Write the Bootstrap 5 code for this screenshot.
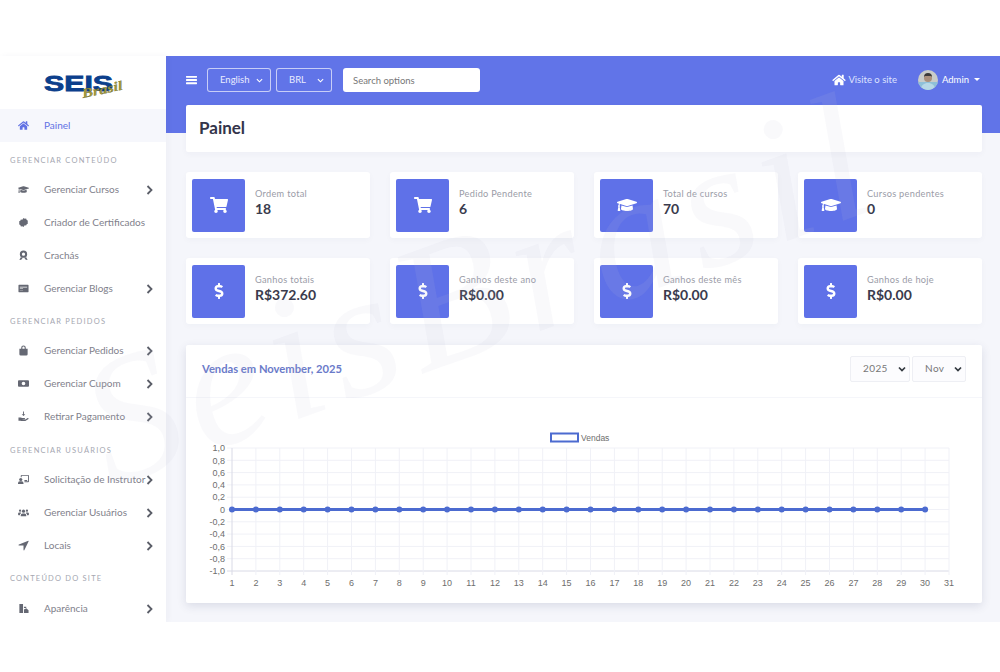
<!doctype html>
<html lang="pt">
<head>
<meta charset="utf-8">
<title>Painel</title>
<link href="https://cdn.jsdelivr.net/npm/bootstrap@5.3.0/dist/css/bootstrap.min.css" rel="stylesheet">
<style>
body{background:#fff;font-family:"Lato","Noto Sans",sans-serif;overflow:hidden;color:#3a3b4d}
.shell{margin-top:56px;height:566px;position:relative}
.side{width:166px;flex:none;background:#fff;box-shadow:2px 0 6px rgba(40,50,90,.04);position:relative;overflow:hidden}
.brandbox{height:53px}
.side-item{height:33px;padding:0 13px 0 18px;color:#7f818b;font-size:10px;white-space:nowrap}
.side-item.on{background:#f6f7fc;color:#6272e4}
.side-ico{width:11px;height:11px;fill:#656873;margin-right:15px;flex:none}
.on .side-ico{fill:#6272e4}
.chev{width:7px;height:10px;margin-left:auto;stroke:#5b5e68;stroke-width:1.800;fill:none;flex:none}
.side-head{height:25px;margin-top:4px;padding-left:10px;font-size:7.5px;letter-spacing:1.2px;color:#a5a7b1;text-transform:uppercase}
.side-head.gap-a{margin-top:6px}
.side-head.gap-b{margin-top:5px}
.side-head.gap-c{height:26px}
.mainp{background:linear-gradient(#6174e8 77px,#f5f6fb 77px);padding:0 18px 0 20px}
.topbar{height:48px}
.burger{width:11px;height:12px;fill:#fff;margin-right:10px}
.sel-dark,.sel-dark:focus{background-color:transparent;border:1px solid rgba(255,255,255,.65);color:#e9ecff;font-size:9.5px;height:24px;padding:0 10px 0 12px;border-radius:3px;background-size:7px;background-position:right 7px center;box-shadow:none;background-image:url("data:image/svg+xml,%3csvg xmlns='http://www.w3.org/2000/svg' viewBox='0 0 16 16'%3e%3cpath fill='none' stroke='%23fff' stroke-width='2.500' d='M2 5l6 6 6-6'/%3e%3c/svg%3e")}
.w-en{width:64px;margin-right:5px}.w-br{width:56px;margin-right:11px}
.searchb{width:137px;height:24px;font-size:9.5px;border:0;border-radius:3px;padding:0 10px;color:#666}
.searchb::placeholder{color:#777}
.visit{font-size:9.5px;color:#dfe3ff;text-decoration:none;margin-right:21px}
.visit svg{width:14px;height:12px;fill:#fff;margin-right:2px}
.avat{width:20px;height:20px;border-radius:50%;margin-right:4px}
.admin{font-size:9.5px;color:#fff;margin-right:2px}
.admin.dropdown-toggle::after{margin-left:5px;border-top-width:3px;border-left-width:3px;border-right-width:3px;vertical-align:2px}
.titlecard{height:47px;margin-top:1px;margin-bottom:20px;border-radius:2px;padding-left:13px;background:#fff;box-shadow:0 2px 6px rgba(40,50,90,.04);border:0}
.titlecard h1{font-size:17px;font-weight:700;margin:0;color:#33344a}
.stat-row{--bs-gutter-x:20px;--bs-gutter-y:20px}
.statc{height:66px;border:0;border-radius:3px;padding:6px;background:#fff;box-shadow:0 2px 6px rgba(40,50,90,.03)}
.statbox{width:53px;height:53px;background:#5f71e8;border-radius:2px;margin-right:10px;flex:none}
.statbox svg{fill:#fff;height:16px;width:20px}
.stat-txt{padding-bottom:5px}
.stat-l{font-size:9.2px;letter-spacing:.3px;color:#9a9ca7;line-height:13px}
.stat-v{font-size:14px;font-weight:700;color:#3a3b4d;line-height:18px}
.chartc{margin-top:21px;height:258px;border:0;border-radius:2px;background:#fff;box-shadow:0 3px 10px rgba(40,50,90,.13)}
.charth{height:53px;padding:0 16px 5px;border-bottom:1px solid #f5f6fa}
.charth h2{font-size:11.2px;font-weight:700;color:#6a7ac9;margin:0}
.sel-lt,.sel-lt:focus{height:26px;font-size:10px;letter-spacing:.4px;border:1px solid #eeeff4;border-radius:2px;color:#777;padding:0 8px 0 12px;background-color:#fcfcfe;background-size:8px;background-position:right 3px center;box-shadow:none;background-image:url("data:image/svg+xml,%3csvg xmlns='http://www.w3.org/2000/svg' viewBox='0 0 16 16'%3e%3cpath fill='none' stroke='%23343a40' stroke-width='3.500' d='M2 5l6 6 6-6'/%3e%3c/svg%3e")}
.w-y{width:60px;margin-right:2px}.w-m{width:54px}
.chartsvg{display:block;width:796px;height:205px}
.chartsvg text{font-family:"Liberation Sans",sans-serif;font-size:9px;fill:#6e6e6e}
.chartsvg text.lg{font-size:8.5px}
.wmark{position:absolute;left:90px;top:312px;font:italic 400 180px "Liberation Serif",serif;color:rgba(196,198,218,.1);transform:rotate(-20deg);transform-origin:left center;white-space:nowrap;pointer-events:none;line-height:.7;letter-spacing:10px}
</style>
</head>
<body>
<svg width="0" height="0" class="d-block" aria-hidden="true">
<symbol id="i-home" viewBox="0 0 576 512"><path d="M280.37 148.26L96 300.11V464a16 16 0 0 0 16 16l112.06-.29a16 16 0 0 0 15.92-16V368a16 16 0 0 1 16-16h64a16 16 0 0 1 16 16v95.64a16 16 0 0 0 16 16.05L464 480a16 16 0 0 0 16-16V300L295.67 148.26a12.19 12.19 0 0 0-15.3 0zM571.6 251.47L488 182.56V44.05a12 12 0 0 0-12-12h-56a12 12 0 0 0-12 12v72.61L318.47 43a48 48 0 0 0-61 0L4.34 251.47a12 12 0 0 0-1.6 16.9l25.5 31A12 12 0 0 0 45.15 301l235.22-193.74a12.19 12.19 0 0 1 15.3 0L530.9 301a12 12 0 0 0 16.9-1.6l25.5-31a12 12 0 0 0-1.7-16.93z"/></symbol>
<symbol id="i-cart" viewBox="0 0 576 512"><path d="M528.12 301.319l47.273-208C578.806 78.301 567.391 64 551.99 64H159.208l-9.166-44.81C147.758 8.021 137.93 0 126.529 0H24C10.745 0 0 10.745 0 24v16c0 13.255 10.745 24 24 24h69.883l70.248 343.435C147.325 417.1 136 435.222 136 456c0 30.928 25.072 56 56 56s56-25.072 56-56c0-15.674-6.447-29.835-16.824-40h209.647C430.447 426.165 424 440.326 424 456c0 30.928 25.072 56 56 56s56-25.072 56-56c0-22.172-12.888-41.332-31.579-50.405l5.517-24.276c3.413-15.018-8.002-29.319-23.403-29.319H218.117l-6.545-32h293.145c11.206 0 20.92-7.754 23.403-18.681z"/></symbol>
<symbol id="i-cap" viewBox="0 0 640 512"><path d="M622.34 153.2L343.4 67.5c-15.2-4.67-31.6-4.67-46.79 0L17.66 153.2c-23.54 7.23-23.54 38.36 0 45.59l48.63 14.94c-10.67 13.19-17.23 29.28-17.88 46.9C38.78 266.15 32 276.11 32 288c0 10.78 5.68 19.85 13.86 25.65L20.33 428.53C18.11 438.52 25.71 448 35.94 448h56.11c10.24 0 17.84-9.48 15.62-19.47L82.14 313.65C90.32 307.85 96 298.78 96 288c0-11.57-6.47-21.25-15.66-26.87.76-15.02 8.44-28.3 20.69-36.72L296.6 284.5c9.06 2.78 26.44 6.25 46.79 0l278.95-85.7c23.55-7.24 23.55-38.36 0-45.6zM352.79 315.09c-28.53 8.76-52.84 3.92-65.59 0l-145.02-44.55L128 384c0 35.35 85.96 64 192 64s192-28.65 192-64l-14.18-113.47-145.03 44.56z"/></symbol>
<symbol id="i-usd" viewBox="0 0 288 512"><path d="M209.2 233.4l-108-31.6C88.7 198.2 80 186.5 80 173.5c0-16.3 13.2-29.5 29.5-29.5h66.3c12.2 0 24.2 3.7 34.2 10.5 6.1 4.1 14.3 3.1 19.5-2l34.8-34c7.1-6.9 6.1-18.4-1.8-24.5C238 74.8 207.4 64.1 176 64V16c0-8.8-7.2-16-16-16h-32c-8.8 0-16 7.2-16 16v48h-2.5C45.8 64-5.4 118.7.5 183.6c4.2 46.1 39.4 83.6 83.8 96.6l102.5 30c12.5 3.7 21.2 15.3 21.2 28.3 0 16.3-13.2 29.5-29.5 29.5h-66.3C100 368 88 364.3 78 357.5c-6.1-4.1-14.3-3.1-19.5 2l-34.8 34c-7.1 6.9-6.1 18.4 1.8 24.5 24.5 19.2 55.1 29.9 86.5 30v48c0 8.8 7.2 16 16 16h32c8.8 0 16-7.2 16-16v-48.2c46.6-.9 90.3-28.6 105.7-72.7 21.5-61.6-14.6-124.8-72.5-141.7z"/></symbol>
<symbol id="i-cert" viewBox="0 0 24 24"><path d="M12 2l2.6 1.8 3.1-.3 1.3 2.9 2.7 1.6-.7 3 .7 3-2.7 1.6-1.3 2.9-3.1-.3L12 22l-2.6-1.8-3.1.3-1.3-2.9-2.7-1.6.7-3-.7-3 2.7-1.6 1.3-2.9 3.1.3z"/></symbol>
<symbol id="i-award" viewBox="0 0 24 24"><path fill-rule="evenodd" d="M12 1a8 8 0 1 1 0 16 8 8 0 0 1 0-16zm0 4.500a3.500 3.500 0 1 0 0 7 3.500 3.500 0 0 0 0-7z"/><path d="M6 16l-3 6 4-.5 2-2.500 1-2zM18 16l3 6-4-.5-2-2.500-1-2z"/></symbol>
<symbol id="i-blog" viewBox="0 0 24 24"><path fill-rule="evenodd" d="M2 4h20a1 1 0 0 1 1 1v14a1 1 0 0 1-1 1H2a1 1 0 0 1-1-1V5a1 1 0 0 1 1-1zm2 4v2h16V8zm0 4v1h7v-1zm0 3v1h7v-1z"/></symbol>
<symbol id="i-bag" viewBox="0 0 24 24"><path fill-rule="evenodd" d="M7 8V6a5 5 0 0 1 10 0v2h4v12a3 3 0 0 1-3 3H6a3 3 0 0 1-3-3V8zm2.500 0h5V6a2.500 2.500 0 0 0-5 0z"/></symbol>
<symbol id="i-tick" viewBox="0 0 24 24"><path fill-rule="evenodd" d="M2 5h20a2 2 0 0 1 2 2v10a2 2 0 0 1-2 2H2a2 2 0 0 1-2-2V7a2 2 0 0 1 2-2zm10 3a4 4 0 1 0 0 8 4 4 0 0 0 0-8z"/></symbol>
<symbol id="i-hand" viewBox="0 0 24 24"><path d="M11 1h2v6h3l-4 4-4-4h3zM1 14h5l3 1.500h5a1.500 1.500 0 0 1 0 3h-4v.5h5l6-3.500a1.500 1.500 0 0 1 2 2l-7 4.500H7l-2-1H1z"/></symbol>
<symbol id="i-board" viewBox="0 0 24 24"><path fill-rule="evenodd" d="M8 2h14a2 2 0 0 1 2 2v12a2 2 0 0 1-2 2h-8v-2h8V4H8v3H6V4a2 2 0 0 1 2-2z"/><circle cx="6" cy="12" r="3.500"/><path d="M0 22v-2a4 4 0 0 1 4-4h4a4 4 0 0 1 4 4v2zM14 13h6v2h-6z"/></symbol>
<symbol id="i-users" viewBox="0 0 24 24"><circle cx="12" cy="9" r="3.500"/><circle cx="4.500" cy="8" r="2.500"/><circle cx="19.500" cy="8" r="2.500"/><path d="M6 20v-2a4 4 0 0 1 4-4h4a4 4 0 0 1 4 4v2zM0 16v-1a3 3 0 0 1 3-3h3l1 1a6 6 0 0 0-3 5H1zM24 16v-1a3 3 0 0 0-3-3h-3l-1 1a6 6 0 0 1 3 5h3z"/></symbol>
<symbol id="i-loc" viewBox="0 0 24 24"><path d="M22.500 1.500a1 1 0 0 1 .5 1.500L14 22a1 1 0 0 1-2-.5V12H2.500a1 1 0 0 1-.5-2z"/></symbol>
<symbol id="i-app" viewBox="0 0 24 24"><path d="M3 2h8v20H3zM13 8h5v3h-5zM13 14l5-2.500 5 4.500v6H13z"/></symbol>
<symbol id="i-bars" viewBox="0 0 24 24"><path d="M1 3h22a1 1 0 0 1 1 1v2a1 1 0 0 1-1 1H1a1 1 0 0 1-1-1V4a1 1 0 0 1 1-1zM1 10h22a1 1 0 0 1 1 1v2a1 1 0 0 1-1 1H1a1 1 0 0 1-1-1v-2a1 1 0 0 1 1-1zM1 17h22a1 1 0 0 1 1 1v2a1 1 0 0 1-1 1H1a1 1 0 0 1-1-1v-2a1 1 0 0 1 1-1z"/></symbol>
<symbol id="i-chev" viewBox="0 0 7 10"><path d="M1.500 1l4 4-4 4"/></symbol>
</svg>

<div class="shell d-flex">
  <aside class="side">
    <div class="brandbox d-flex align-items-center justify-content-center">
      <svg width="84" height="40" viewBox="0 0 84 40" role="img" aria-label="Seis Brasil">
        <text x="3" y="27.500" font-family="Liberation Sans" font-weight="700" font-size="22" textLength="69" lengthAdjust="spacingAndGlyphs" fill="#0c3f8c" stroke="#0c3f8c" stroke-width=".8">SEIS</text>
        <text x="42" y="35" font-family="Liberation Serif" font-style="italic" font-weight="700" font-size="13" textLength="41" lengthAdjust="spacingAndGlyphs" fill="#a39a3c" stroke="#5e5a28" stroke-width=".25" transform="rotate(-12 42 35)">Brasil</text>
      </svg>
    </div>
    <div class="side-item on d-flex align-items-center"><svg class="side-ico"><use href="#i-home"/></svg>Painel</div>
    <div class="side-head gap-a d-flex align-items-center">Gerenciar conteúdo</div>
    <div class="side-item d-flex align-items-center"><svg class="side-ico"><use href="#i-cap"/></svg>Gerenciar Cursos<svg class="chev"><use href="#i-chev"/></svg></div>
    <div class="side-item d-flex align-items-center"><svg class="side-ico"><use href="#i-cert"/></svg>Criador de Certificados</div>
    <div class="side-item d-flex align-items-center"><svg class="side-ico"><use href="#i-award"/></svg>Crachás</div>
    <div class="side-item d-flex align-items-center"><svg class="side-ico"><use href="#i-blog"/></svg>Gerenciar Blogs<svg class="chev"><use href="#i-chev"/></svg></div>
    <div class="side-head d-flex align-items-center">Gerenciar pedidos</div>
    <div class="side-item d-flex align-items-center"><svg class="side-ico"><use href="#i-bag"/></svg>Gerenciar Pedidos<svg class="chev"><use href="#i-chev"/></svg></div>
    <div class="side-item d-flex align-items-center"><svg class="side-ico"><use href="#i-tick"/></svg>Gerenciar Cupom<svg class="chev"><use href="#i-chev"/></svg></div>
    <div class="side-item d-flex align-items-center"><svg class="side-ico"><use href="#i-hand"/></svg>Retirar Pagamento<svg class="chev"><use href="#i-chev"/></svg></div>
    <div class="side-head gap-b d-flex align-items-center">Gerenciar usuários</div>
    <div class="side-item d-flex align-items-center"><svg class="side-ico"><use href="#i-board"/></svg>Solicitação de Instrutor<svg class="chev"><use href="#i-chev"/></svg></div>
    <div class="side-item d-flex align-items-center"><svg class="side-ico"><use href="#i-users"/></svg>Gerenciar Usuários<svg class="chev"><use href="#i-chev"/></svg></div>
    <div class="side-item d-flex align-items-center"><svg class="side-ico"><use href="#i-loc"/></svg>Locais<svg class="chev"><use href="#i-chev"/></svg></div>
    <div class="side-head gap-c d-flex align-items-center">Conteúdo do site</div>
    <div class="side-item d-flex align-items-center"><svg class="side-ico"><use href="#i-app"/></svg>Aparência<svg class="chev"><use href="#i-chev"/></svg></div>
  </aside>

  <main class="mainp flex-grow-1">
    <div class="topbar d-flex align-items-center">
      <svg class="burger"><use href="#i-bars"/></svg>
      <select class="form-select sel-dark w-en" aria-label="Idioma"><option>English</option></select>
      <select class="form-select sel-dark w-br" aria-label="Moeda"><option>BRL</option></select>
      <input class="form-control searchb" type="text" placeholder="Search options">
      <a href="#" class="visit ms-auto d-flex align-items-center"><svg><use href="#i-home"/></svg>Visite o site</a>
      <svg class="avat" viewBox="0 0 20 20" aria-hidden="true">
        <rect width="20" height="20" fill="#c9ccc9"/><rect y="12" width="20" height="8" fill="#8fc0d8"/>
        <circle cx="10" cy="8" r="4" fill="#a98f7c"/><path d="M6 7a4 4 0 0 1 8 0l-1-1H7z" fill="#3d3a39"/><path d="M3 20c0-5 3-7 7-7s7 2 7 7z" fill="#b7d8e6"/>
      </svg>
      <span class="admin dropdown-toggle">Admin</span>
    </div>

    <div class="card titlecard justify-content-center"><h1>Painel</h1></div>

    <div class="row stat-row">
      <div class="col-3"><div class="card statc flex-row align-items-center"><div class="statbox d-flex align-items-center justify-content-center"><svg><use href="#i-cart"/></svg></div><div class="stat-txt"><div class="stat-l">Ordem total</div><div class="stat-v">18</div></div></div></div>
      <div class="col-3"><div class="card statc flex-row align-items-center"><div class="statbox d-flex align-items-center justify-content-center"><svg><use href="#i-cart"/></svg></div><div class="stat-txt"><div class="stat-l">Pedido Pendente</div><div class="stat-v">6</div></div></div></div>
      <div class="col-3"><div class="card statc flex-row align-items-center"><div class="statbox d-flex align-items-center justify-content-center"><svg><use href="#i-cap"/></svg></div><div class="stat-txt"><div class="stat-l">Total de cursos</div><div class="stat-v">70</div></div></div></div>
      <div class="col-3"><div class="card statc flex-row align-items-center"><div class="statbox d-flex align-items-center justify-content-center"><svg><use href="#i-cap"/></svg></div><div class="stat-txt"><div class="stat-l">Cursos pendentes</div><div class="stat-v">0</div></div></div></div>
      <div class="col-3"><div class="card statc flex-row align-items-center"><div class="statbox d-flex align-items-center justify-content-center"><svg><use href="#i-usd"/></svg></div><div class="stat-txt"><div class="stat-l">Ganhos totais</div><div class="stat-v">R$372.60</div></div></div></div>
      <div class="col-3"><div class="card statc flex-row align-items-center"><div class="statbox d-flex align-items-center justify-content-center"><svg><use href="#i-usd"/></svg></div><div class="stat-txt"><div class="stat-l">Ganhos deste ano</div><div class="stat-v">R$0.00</div></div></div></div>
      <div class="col-3"><div class="card statc flex-row align-items-center"><div class="statbox d-flex align-items-center justify-content-center"><svg><use href="#i-usd"/></svg></div><div class="stat-txt"><div class="stat-l">Ganhos deste mês</div><div class="stat-v">R$0.00</div></div></div></div>
      <div class="col-3"><div class="card statc flex-row align-items-center"><div class="statbox d-flex align-items-center justify-content-center"><svg><use href="#i-usd"/></svg></div><div class="stat-txt"><div class="stat-l">Ganhos de hoje</div><div class="stat-v">R$0.00</div></div></div></div>
    </div>

    <div class="card chartc">
      <div class="charth d-flex align-items-center">
        <h2 class="me-auto">Vendas em November, 2025</h2>
        <select class="form-select sel-lt w-y" aria-label="Ano"><option>2025</option></select>
        <select class="form-select sel-lt w-m" aria-label="Mês"><option>Nov</option></select>
      </div>
      <svg class="chartsvg" id="chart" viewBox="186 398 796 205" role="img" aria-label="Vendas"></svg>
    </div>
  </main>
  <div class="wmark" aria-hidden="true">SeisBrasil</div>
</div>

<script>
(function(){
  var s='', x0=232, dx=23.9, top=448, dy=12.3, i, x, y;
  var labs=['1,0','0,8','0,6','0,4','0,2','0','-0,2','-0,4','-0,6','-0,8','-1,0'];
  for(i=0;i<=10;i++){
    y=top+i*dy;
    s+='<line x1="227" x2="'+(x0+30*dx)+'" y1="'+y+'" y2="'+y+'" stroke="'+(i==10?'#d9dae6':'#f0f1f7')+'"/>';
    s+='<text x="225" y="'+(y+3.2)+'" text-anchor="end">'+labs[i]+'</text>';
  }
  for(i=0;i<=30;i++){
    x=x0+i*dx;
    s+='<line x1="'+x+'" x2="'+x+'" y1="'+top+'" y2="'+(top+10*dy+4)+'" stroke="'+(i==0?'#d9dae6':'#f0f1f7')+'"/>';
    s+='<text x="'+x+'" y="586" text-anchor="middle">'+(i+1)+'</text>';
  }
  y=top+5*dy;
  s+='<line x1="'+x0+'" x2="'+(x0+29*dx)+'" y1="'+y+'" y2="'+y+'" stroke="#4c6bd0" stroke-width="3"/>';
  for(i=0;i<30;i++){s+='<circle cx="'+(x0+i*dx)+'" cy="'+y+'" r="3" fill="#4c6bd0"/>';}
  s+='<rect x="551" y="433.500" width="27" height="8" fill="#fff" stroke="#4c6bd0" stroke-width="2"/>';
  s+='<text class="lg" x="581" y="440.500">Vendas</text>';
  document.getElementById('chart').innerHTML=s;
})();
</script>
<script src="https://cdn.jsdelivr.net/npm/bootstrap@5.3.0/dist/js/bootstrap.bundle.min.js"></script>
</body>
</html>
